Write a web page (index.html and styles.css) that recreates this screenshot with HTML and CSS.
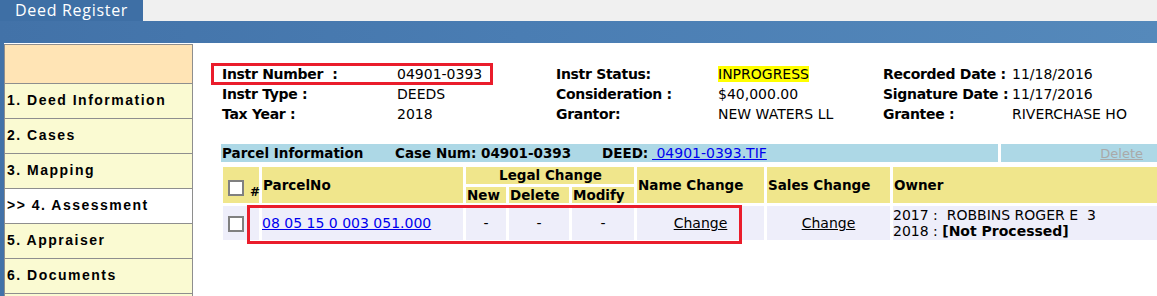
FILE: index.html
```html
<!DOCTYPE html>
<html>
<head>
<meta charset="utf-8">
<title>Deed Register</title>
<link rel="stylesheet" href="styles.css">
</head>
<body>
<div class="topbar"><div class="tab">Deed Register</div></div>
<div class="band"></div>
<div class="main">
  <nav class="sidebar">
    <div class="side-head"></div>
    <div class="side-item">1. Deed Information</div>
    <div class="side-item">2. Cases</div>
    <div class="side-item">3. Mapping</div>
    <div class="side-item side-active">&gt;&gt; 4. Assessment</div>
    <div class="side-item">5. Appraiser</div>
    <div class="side-item">6. Documents</div>
    <div class="side-item">&nbsp;</div>
  </nav>
  <section class="content">
    <div class="info">
      <div class="info-grid">
        <div class="lbl">Instr Number&nbsp;&nbsp;:</div>
        <div class="val">04901-0393</div>
        <div class="lbl">Instr Status:</div>
        <div class="val"><span class="hilite">INPROGRESS</span></div>
        <div class="lbl">Recorded Date :</div>
        <div class="val">11/18/2016</div>

        <div class="lbl">Instr Type :</div>
        <div class="val">DEEDS</div>
        <div class="lbl">Consideration :</div>
        <div class="val">$40,000.00</div>
        <div class="lbl">Signature Date :</div>
        <div class="val">11/17/2016</div>

        <div class="lbl">Tax Year :</div>
        <div class="val">2018</div>
        <div class="lbl">Grantor:</div>
        <div class="val">NEW WATERS LL</div>
        <div class="lbl">Grantee :</div>
        <div class="val">RIVERCHASE HO</div>
      </div>
      <span class="mark mark-instr"></span>
    </div>

    <div class="parcel-bar">
      <div class="pb-main">
        <span class="pb-title">Parcel Information</span><span class="pb-case">Case Num: 04901-0393</span><span class="pb-deed">DEED:</span><a class="pb-link" href="#">&nbsp;04901-0393.TIF</a>
      </div>
      <div class="pb-side"><a class="pb-delete" href="#">Delete</a></div>
    </div>

    <div class="table-wrap">
      <table class="parcels">
        <colgroup>
          <col class="c-check"><col class="c-parcel"><col class="c-new"><col class="c-del"><col class="c-mod"><col class="c-name"><col class="c-sales"><col class="c-owner">
        </colgroup>
        <thead>
          <tr class="hr1">
            <th rowspan="2" class="th-check"><input type="checkbox" class="cb"><span class="hash">#</span></th>
            <th rowspan="2">ParcelNo</th>
            <th colspan="3" class="th-center">Legal Change</th>
            <th rowspan="2">Name Change</th>
            <th rowspan="2">Sales Change</th>
            <th rowspan="2">Owner</th>
          </tr>
          <tr class="hr2">
            <th>New</th>
            <th>Delete</th>
            <th>Modify</th>
          </tr>
        </thead>
        <tbody>
          <tr class="drow">
            <td class="td-check"><input type="checkbox" class="cb"></td>
            <td><a class="parcel-link" href="#">08 05 15 0 003 051.000</a></td>
            <td class="td-center">-</td>
            <td class="td-center">-</td>
            <td class="td-center">-</td>
            <td class="td-center"><a class="chg" href="#">Change</a></td>
            <td class="td-center"><a class="chg" href="#">Change</a></td>
            <td class="owner"><div>2017 :  ROBBINS ROGER E  3</div><div>2018 : <b>[Not Processed]</b></div></td>
          </tr>
        </tbody>
      </table>
      <span class="mark mark-row"></span>
    </div>
  </section>
</div>
</body>
</html>
```

FILE: styles.css
```css
html, body {
  margin: 0;
  padding: 0;
  background: #ffffff;
  overflow: hidden;
}

body {
  font-family: "DejaVu Sans", Verdana, sans-serif;
  color: #000;
  width: 1157px;
  height: 296px;
}

.topbar {
  height: 21px;
  background: #f0f0f0;
  display: flex;
}

.tab {
  width: 128px;
  padding-left: 15px;
  background: #3e6fa5;
  color: #ffffff;
  font-family: "Open Sans", "DejaVu Sans", sans-serif;
  font-size: 16px;
  letter-spacing: 0.7px;
  line-height: 21px;
  white-space: nowrap;
}

.band {
  height: 22px;
  background: linear-gradient(to right, #4272a8, #4a7db3 45%, #5589bb);
}

.main {
  display: flex;
  border-left: 4px solid #4272a8;
  height: 253px;
}

.sidebar {
  width: 189px;
  box-sizing: border-box;
  flex: none;
  margin-top: 1px;
  border: 1px solid #8e8e8e;
  border-bottom: none;
  background: #fafad2;
}

.side-head {
  height: 38px;
  background: #ffe4b5;
  border-bottom: 1px solid #8e8e8e;
}

.side-item {
  height: 34px;
  line-height: 33px;
  padding-left: 2px;
  border-bottom: 1px solid #8e8e8e;
  font-family: "Liberation Sans", Arial, sans-serif;
  font-weight: bold;
  font-size: 14px;
  letter-spacing: 1.5px;
  white-space: nowrap;
  color: #000;
}

.side-active {
  background: #ffffff;
}

.content {
  flex: 1;
  min-width: 0;
  overflow: hidden;
  padding: 21px 0 0 29px;
}

/* header information */
.info {
  position: relative;
}

.info-grid {
  display: grid;
  grid-template-columns: 175px 159px 162px 165px 129px 1fr;
  grid-auto-rows: 20px;
  line-height: 20px;
  white-space: nowrap;
}

.lbl {
  font-weight: bold;
  font-size: 14px;
  letter-spacing: -0.3px;
}

.val {
  font-size: 14px;
}

.hilite {
  background: #ffff00;
}

.mark {
  position: absolute;
  box-sizing: border-box;
  border: 3px solid #ea1c2b;
  pointer-events: none;
}

.mark-instr {
  left: -11px;
  top: -1px;
  width: 282px;
  height: 22px;
}

/* parcel bar */
.parcel-bar {
  display: flex;
  gap: 3px;
  margin: 20px 0 0 -1px;
  height: 18px;
  line-height: 18px;
  white-space: nowrap;
}

.pb-main {
  width: 776px;
  flex: none;
  padding-left: 1px;
  background: #add8e6;
  font-size: 13.5px;
  overflow: hidden;
}

.pb-title,
.pb-case,
.pb-deed {
  display: inline-block;
  font-weight: bold;
}

.pb-title { width: 173px; }
.pb-case { width: 207px; }
.pb-deed { width: 50px; }

.pb-link {
  color: #0000ee;
  text-decoration: underline;
  font-size: 14px;
}

.pb-side {
  flex: 1;
  background: #add8e6;
  text-align: right;
  padding-right: 14px;
}

.pb-delete {
  color: #a9a9a9;
  font-size: 13px;
  text-decoration: underline;
}

/* parcels table */
.table-wrap {
  position: relative;
  margin: 2px 0 0 -2px;
}

.parcels {
  border-collapse: separate;
  border-spacing: 3px;
  table-layout: fixed;
  width: 973px;
  font-size: 14px;
}

.c-check { width: 36px; }
.c-parcel { width: 201px; }
.c-new { width: 40px; }
.c-del { width: 60px; }
.c-mod { width: 62px; }
.c-name { width: 127px; }
.c-sales { width: 123px; }
.c-owner { width: 300px; }

.parcels th {
  background: #f0e68c;
  font-weight: bold;
  font-size: 13.5px;
  text-align: left;
  padding: 0 0 0 1px;
  white-space: nowrap;
  vertical-align: middle;
}

.parcels .hr1 th {
  height: 17px;
  line-height: 17px;
}

.parcels .hr2 th {
  height: 16px;
  line-height: 16px;
}

.parcels .th-center {
  text-align: center;
}

.parcels .th-check {
  padding: 10px 0 0 5px;
  line-height: 16px;
}

.cb {
  appearance: none;
  -webkit-appearance: none;
  width: 16px;
  height: 16px;
  margin: 0;
  border: 2px solid #808080;
  background: #ffffff;
  box-sizing: border-box;
  vertical-align: middle;
}

.hash {
  font-size: 12px;
  margin-left: 6px;
  vertical-align: -4px;
}

.parcels td {
  background: #eeeefa;
  height: 34px;
  padding: 0;
  white-space: nowrap;
  vertical-align: middle;
}

.parcels .td-check {
  padding-left: 5px;
}

.parcels .td-center {
  text-align: center;
}

.parcel-link {
  color: #0000ee;
  text-decoration: underline;
}

.chg {
  color: #000;
  text-decoration: underline;
}

.owner {
  line-height: 16px;
  white-space: pre !important;
}

.mark-row {
  left: 27px;
  top: 41px;
  width: 495px;
  height: 39px;
}
```
